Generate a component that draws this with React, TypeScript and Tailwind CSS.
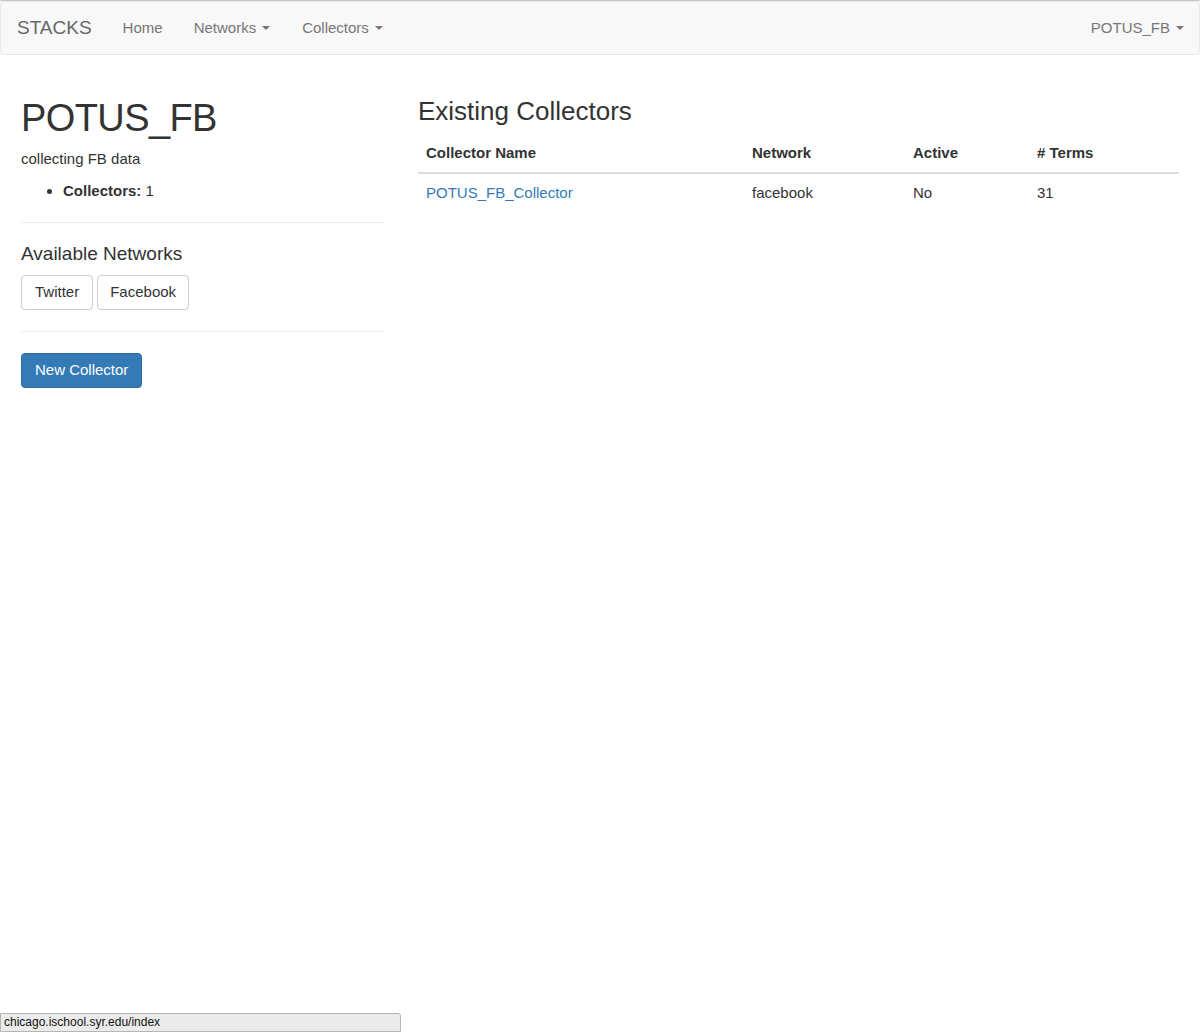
import React from "react";

const font = { fontFamily: '"Liberation Sans", Arial, Helvetica, sans-serif' };

const Caret = () => (
  <span className="inline-block ml-[6px] align-middle w-0 h-0 border-t-[4px] border-t-[#777] border-x-[4px] border-x-transparent" />
);

interface Collector {
  name: string;
  network: string;
  active: string;
  terms: number;
}

const collectors: Collector[] = [
  { name: "POTUS_FB_Collector", network: "facebook", active: "No", terms: 31 },
];

const App: React.FC = () => {
  return (
    <div className="w-[1200px] h-[1034px] bg-white relative overflow-hidden text-[#333]" style={font}>
      {/* Navbar */}
      <div className="border-t border-t-[#c8c8c8] mt-0">
        <nav className="h-[54px] bg-[#f8f8f8] border border-[#e7e7e7] rounded-[4px] flex items-center text-[#777] text-[15px]">
          <span className="ml-[16px] text-[19px] text-[#666]">STACKS</span>
          <span className="ml-[31px]">Home</span>
          <span className="ml-[31px] flex items-center">
            Networks
            <Caret />
          </span>
          <span className="ml-[32px] flex items-center">
            Collectors
            <Caret />
          </span>
          <span className="ml-auto mr-[15px] flex items-center">
            POTUS_FB
            <Caret />
          </span>
        </nav>
      </div>

      <div className="flex pl-[21px] pr-[21px] pt-[38px]">
        {/* Left column */}
        <div className="w-[364px]">
          <h1 className="text-[38px] leading-[50px] tracking-[-0.6px] text-[#333]">POTUS_FB</h1>
          <p className="text-[15px] mt-[5px]">collecting FB data</p>
          <ul className="list-disc pl-[42px] mt-[9px] text-[15px]">
            <li>
              <strong>Collectors:</strong> 1
            </li>
          </ul>
          <hr className="border-t border-[#eee] mt-[20px]" />

          <h4 className="text-[19px] mt-[19px] leading-[24px]">Available Networks</h4>
          <div className="flex gap-[4px] mt-[9px]">
            <button className="h-[35px] px-[13px] border border-[#ccc] rounded-[4px] bg-white text-[15px] text-[#333]">
              Twitter
            </button>
            <button className="h-[35px] px-[12px] border border-[#ccc] rounded-[4px] bg-white text-[15px] text-[#333]">
              Facebook
            </button>
          </div>
          <hr className="border-t border-[#eee] mt-[21px]" />

          <button className="mt-[21px] h-[35px] px-[13px] bg-[#337ab7] border border-[#2e6da4] rounded-[4px] text-[15px] text-white">
            New Collector
          </button>
        </div>

        {/* Right column */}
        <div className="ml-[33px] flex-1">
          <h3 className="text-[26px] leading-[32px] mt-[2px] text-[#333]">Existing Collectors</h3>
          <table className="w-full mt-[6px] text-[15px]">
            <thead>
              <tr className="border-b-2 border-[#ddd]">
                <th className="text-left font-bold pt-[9px] pb-[7px] px-[8px] w-[326px]">Collector Name</th>
                <th className="text-left font-bold pt-[9px] pb-[7px] px-[8px] w-[161px]">Network</th>
                <th className="text-left font-bold pt-[9px] pb-[7px] px-[8px] w-[124px]">Active</th>
                <th className="text-left font-bold pt-[9px] pb-[7px] px-[8px]"># Terms</th>
              </tr>
            </thead>
            <tbody>
              {collectors.map((c, i) => (
                <tr key={i}>
                  <td className="py-[8px] px-[8px] text-[#337ab7]">{c.name}</td>
                  <td className="py-[8px] px-[8px]">{c.network}</td>
                  <td className="py-[8px] px-[8px]">{c.active}</td>
                  <td className="py-[8px] px-[8px]">{c.terms}</td>
                </tr>
              ))}
            </tbody>
          </table>
        </div>
      </div>

      {/* Status bar tooltip */}
      <div className="absolute left-0 bottom-[2px] w-[401px] h-[19px] bg-[#ebebeb] border border-[#b5b5b5] rounded-tr-[3px] text-[12px] leading-[17px] pl-[3px] text-[#111]">
        chicago.ischool.syr.edu/index
      </div>
    </div>
  );
};

export default App;
